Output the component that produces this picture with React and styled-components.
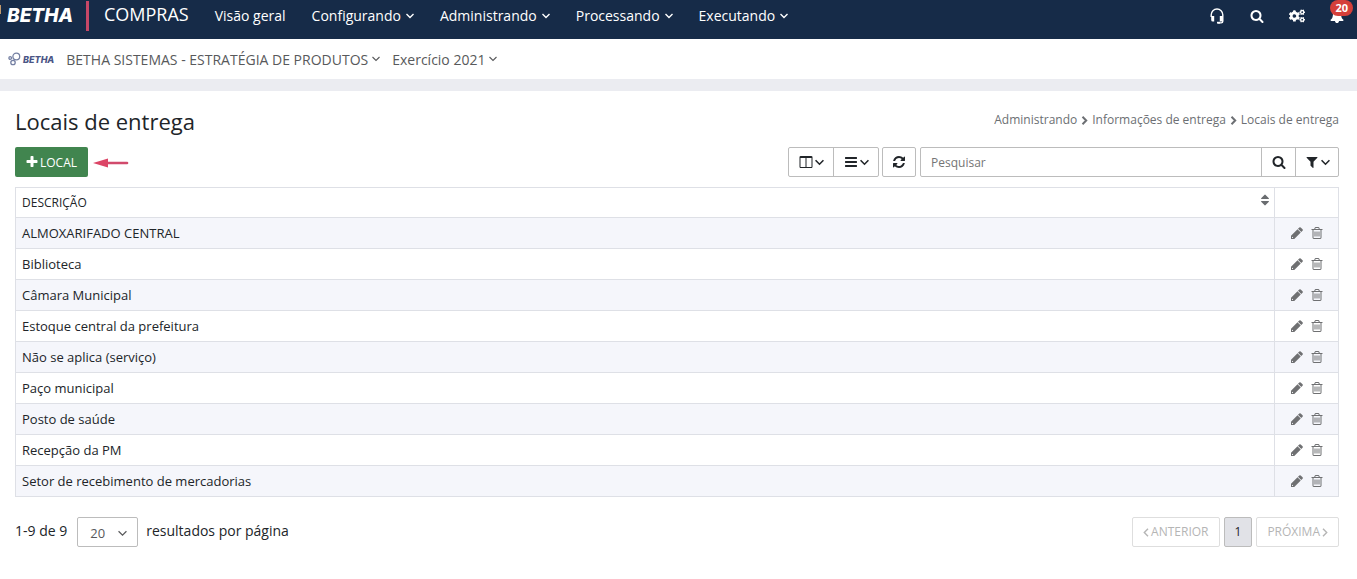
import React, { useState } from "react";
import styled, { createGlobalStyle } from "styled-components";
import { FaCogs } from "react-icons/fa";

const paths = {
  search:
    "M1216 832q0-185-131.5-316.5t-316.5-131.5-316.5 131.5-131.5 316.5 131.5 316.5 316.5 131.5 316.5-131.5 131.5-316.5zm512 832q0 52-38 90t-90 38q-54 0-90-38l-343-342q-179 124-399 124-143 0-273.5-55.5t-225-150-150-225-55.5-273.5 55.5-273.5 150-225 225-150 273.5-55.5 273.5 55.5 225 150 150 225 55.5 273.5q0 220-124 399l343 343q37 37 37 90z",
  bell: "M1728 1408q0 52-38 90t-90 38h-448q0 106-75 181t-181 75-181-75-75-181h-448q-52 0-90-38t-38-90q50-42 91-88t85-119.5 74.5-158.5 50-206 19.5-260q0-152 117-282.5t307-158.5q-8-19-8-39 0-40 28-68t68-28 68 28 28 68q0 20-8 39 190 28 307 158.5t117 282.5q0 139 19.5 260t50 206 74.5 158.5 85 119.5 91 88z",
  plus: "M1600 736v192q0 40-28 68t-68 28h-416v416q0 40-28 68t-68 28h-192q-40 0-68-28t-28-68v-416h-416q-40 0-68-28t-28-68v-192q0-40 28-68t68-28h416v-416q0-40 28-68t68-28h192q40 0 68 28t28 68v416h416q40 0 68 28t28 68z",
  columns:
    "M224 1536h608v-1152h-640v1120q0 13 9.500 22.500t22.500 9.500zm1376-32v-1120h-640v1152h608q13 0 22.500-9.500t9.500-22.500zm128-1216v1216q0 66-47 113t-113 47h-1344q-66 0-113-47t-47-113v-1216q0-66 47-113t113-47h1344q66 0 113 47t47 113z",
  bars: "M1664 1344v128q0 26-19 45t-45 19h-1408q-26 0-45-19t-19-45v-128q0-26 19-45t45-19h1408q26 0 45 19t19 45zm0-512v128q0 26-19 45t-45 19h-1408q-26 0-45-19t-19-45v-128q0-26 19-45t45-19h1408q26 0 45 19t19 45zm0-512v128q0 26-19 45t-45 19h-1408q-26 0-45-19t-19-45v-128q0-26 19-45t45-19h1408q26 0 45 19t19 45z",
  refresh:
    "M1639 1056q0 5-1 7-64 268-268 434.5t-478 166.5q-146 0-282.5-55t-243.5-157l-129 129q-19 19-45 19t-45-19-19-45v-448q0-26 19-45t45-19h448q26 0 45 19t19 45-19 45l-137 137q71 66 161 102t187 36q134 0 250-65t186-179q11-17 53-117 8-23 30-23h192q13 0 22.5 9.5t9.5 22.5zm25-800v448q0 26-19 45t-45 19h-448q-26 0-45-19t-19-45 19-45l138-138q-148-137-349-137-134 0-250 65t-186 179q-11 17-53 117-8 23-30 23h-199q-13 0-22.5-9.5t-9.5-22.5v-7q65-268 270-434.5t480-166.5q146 0 284 55.5t245 156.5l130-129q19-19 45-19t45 19 19 45z",
  filter:
    "M1595 295q17 41-14 70l-493 493v742q0 42-39 59-13 5-25 5-27 0-45-19l-256-256q-19-19-19-45v-486l-493-493q-31-29-14-70 17-39 59-39h1280q42 0 59 39z",
  sort: "M1408 1088q0 26-19 45l-448 448q-19 19-45 19t-45-19l-448-448q-19-19-19-45t19-45 45-19h896q26 0 45 19t19 45zm0-384q0 26-19 45t-45 19h-896q-26 0-45-19t-19-45 19-45l448-448q19-19 45-19t45 19l448 448q19 19 19 45z",
  pencil:
    "M350 1536l60-60-95-95-60 60v95h95zm610-1120l416 416-832 832h-416v-416zm683 96q0 53-37 90l-166 166-416-416 166-165q36-38 90-38 53 0 91 38l235 234q37 39 37 91z",
  trash:
    "M704 736v576q0 14-9 23t-23 9h-64q-14 0-23-9t-9-23v-576q0-14 9-23t23-9h64q14 0 23 9t9 23zm256 0v576q0 14-9 23t-23 9h-64q-14 0-23-9t-9-23v-576q0-14 9-23t23-9h64q14 0 23 9t9 23zm256 0v576q0 14-9 23t-23 9h-64q-14 0-23-9t-9-23v-576q0-14 9-23t23-9h64q14 0 23 9t9 23zm128 724v-948h-896v948q0 22 7 40.5t14.5 27 10.5 8.5h832q3 0 10.5-8.5t14.5-27 7-40.5zm-672-1076h448l-48-117q-7-9-17-11h-317q-10 2-17 11zm928 32v64q0 14-9 23t-23 9h-96v948q0 83-47 143.5t-113 60.5h-832q-66 0-113-58.5t-47-141.5v-952h-96q-14 0-23-9t-9-23v-64q0-14 9-23t23-9h309l70-167q15-37 54-63t79-26h320q40 0 79 26t54 63l70 167h309q14 0 23 9t9 23z",
};

const Icon = ({ name, size = 14 }) => (
  <svg width={size} height={size} viewBox="0 0 1792 1792" fill="currentColor" aria-hidden="true">
    <path d={paths[name]} />
  </svg>
);

// chevrons are cropped to the glyph so they sit tight against the label
const Caret = ({ size = 8, thin }) => (
  <svg width={size} height={size} viewBox="0 0 8 8" fill="none" stroke="currentColor" strokeWidth={thin ? 1.1 : 1.4} aria-hidden="true">
    <path d="M0.500 2 4 5.500 7.500 2" />
  </svg>
);

const Chevron = ({ left, bold }) => (
  <svg width={bold ? 7 : 6} height="9" viewBox="0 0 6 9" fill="none" stroke="currentColor" strokeWidth={bold ? 2 : 1.4} aria-hidden="true">
    <path d={left ? "M5 0.800 1.300 4.500 5 8.200" : "M1 0.800 4.700 4.500 1 8.200"} />
  </svg>
);

const Headset = () => (
  <svg width="14" height="16" viewBox="0 0 14 16" fill="none" stroke="currentColor" aria-hidden="true">
    <path d="M1.200 9V6.800a5.800 5.800 0 0 1 11.600 0V13.200q0 1.700-1.700 1.700H8" strokeWidth="1.400" />
    <path d="M1.200 8h3v5.500h-1.500q-1.500 0-1.500-1.500zM12.800 8h-3v5.500h3z" fill="currentColor" stroke="none" />
    <path d="M7 14.700h3" strokeWidth="1.800" />
  </svg>
);

const menu = ["Configurando", "Administrando", "Processando", "Executando"];

const locais = [
  "ALMOXARIFADO CENTRAL",
  "Biblioteca",
  "Câmara Municipal",
  "Estoque central da prefeitura",
  "Não se aplica (serviço)",
  "Paço municipal",
  "Posto de saúde",
  "Recepção da PM",
  "Setor de recebimento de mercadorias",
];

const App = () => {
  const [search, setSearch] = useState("");
  const [pageSize, setPageSize] = useState("20");

  return (
    <>
      <GlobalStyle />
      <TopBar>
        <LogoMark aria-hidden="true" />
        <Logo href="#">BETHA</Logo>
        <Product>COMPRAS</Product>
        <Menu>
          <MenuLink href="#">Visão geral</MenuLink>
          {menu.map((item) => (
            <MenuButton key={item}>
              {item}
              <Caret />
            </MenuButton>
          ))}
        </Menu>
        <Tools>
          <ToolButton aria-label="Suporte">
            <Headset />
          </ToolButton>
          <ToolButton aria-label="Buscar">
            <Icon name="search" />
          </ToolButton>
          <ToolButton aria-label="Configurações">
            <FaCogs size={16} />
          </ToolButton>
          <ToolButton aria-label="Notificações">
            <Icon name="bell" />
            <Badge>20</Badge>
          </ToolButton>
        </Tools>
      </TopBar>

      <ContextBar>
        <Brand>
          <svg width="13" height="14" viewBox="0 0 13 14" fill="none" stroke="#7580a3" strokeWidth="1.300" aria-hidden="true">
            <circle cx="8.300" cy="4.500" r="3.400" />
            <circle cx="5" cy="10.500" r="2.200" />
            <circle cx="2.200" cy="6" r="1.300" />
          </svg>
          BETHA
        </Brand>
        <ContextButton>
          BETHA SISTEMAS - ESTRATÉGIA DE PRODUTOS
          <Caret thin />
        </ContextButton>
        <ContextButton>
          Exercício 2021
          <Caret thin />
        </ContextButton>
      </ContextBar>

      <Main>
        <PageHeader>
          <h1>Locais de entrega</h1>
          <Breadcrumb>
            <a href="#">Administrando</a>
            <Chevron bold />
            <a href="#">Informações de entrega</a>
            <Chevron bold />
            <span>Locais de entrega</span>
          </Breadcrumb>
        </PageHeader>

        <Toolbar>
          <AddButton>
            <Icon name="plus" />
            LOCAL
          </AddButton>
          <svg width="36" height="12" viewBox="0 0 36 12" aria-hidden="true">
            <path d="M13 7H34" stroke="#d14a6c" strokeWidth="2.600" strokeLinecap="round" />
            <path d="M0 7 15 2.500V11.500z" fill="#dc4566" />
          </svg>
          <Tables>
            <Group>
              <GroupButton $width={44} aria-label="Colunas">
                <Icon name="columns" />
                <Caret size={9} />
              </GroupButton>
              <GroupButton $width={45} aria-label="Exibição">
                <Icon name="bars" />
                <Caret size={9} />
              </GroupButton>
            </Group>
            <Group>
              <GroupButton $width={32} aria-label="Atualizar">
                <Icon name="refresh" />
              </GroupButton>
            </Group>
          </Tables>
          <Group $search>
            <SearchInput
              aria-label="Pesquisar"
              placeholder="Pesquisar"
              value={search}
              onChange={(e) => setSearch(e.target.value)}
            />
            <GroupButton $width={34} aria-label="Buscar locais">
              <Icon name="search" />
            </GroupButton>
            <GroupButton $width={43} aria-label="Filtrar">
              <Icon name="filter" />
              <Caret size={9} />
            </GroupButton>
          </Group>
        </Toolbar>

        <Table>
          <thead>
            <tr>
              <th>
                <HeadCell>
                  DESCRIÇÃO
                  <Icon name="sort" />
                </HeadCell>
              </th>
              <ActionHead aria-label="Ações" />
            </tr>
          </thead>
          <tbody>
            {locais.map((local) => (
              <tr key={local}>
                <td>{local}</td>
                <td>
                  <Actions>
                    <RowButton aria-label={`Editar ${local}`}>
                      <Icon name="pencil" />
                    </RowButton>
                    <RowButton aria-label={`Excluir ${local}`}>
                      <Icon name="trash" />
                    </RowButton>
                  </Actions>
                </td>
              </tr>
            ))}
          </tbody>
        </Table>

        <Footer>
          <span>1-9 de 9</span>
          <SelectBox>
            <select
              id="page-size"
              value={pageSize}
              onChange={(e) => setPageSize(e.target.value)}
            >
              <option>20</option>
              <option>50</option>
              <option>100</option>
            </select>
            <Caret size={9} thin />
          </SelectBox>
          <label htmlFor="page-size">resultados por página</label>
          <Pager>
            <PageButton disabled>
              <Chevron left />
              ANTERIOR
            </PageButton>
            <PageButton $active>1</PageButton>
            <PageButton disabled>
              PRÓXIMA
              <Chevron />
            </PageButton>
          </Pager>
        </Footer>
      </Main>
    </>
  );
};

const GlobalStyle = createGlobalStyle`
  * {
    box-sizing: border-box;
  }
  body {
    margin: 0;
    background: #fff;
    color: #212529;
    font-family: "Open Sans", sans-serif;
    font-size: 13px;
  }
  button,
  input,
  select {
    font: inherit;
    color: inherit;
    margin: 0;
  }
  button {
    cursor: pointer;
  }
  a {
    color: inherit;
    text-decoration: none;
  }
  svg {
    flex: none;
    display: block;
  }
`;

const TopBar = styled.header`
  display: flex;
  align-items: center;
  height: 39px;
  padding-bottom: 8px;
  background: #162b48;
  color: #fff;
`;

const LogoMark = styled.span`
  width: 1px;
  height: 9px;
  margin: 0 6px 12px 0;
  background: #c39a6b;
`;

const Logo = styled.a`
  width: 79px;
  font-family: Inter, sans-serif;
  font-size: 19px;
  line-height: 30px;
  font-weight: 800;
  font-style: italic;
`;

const Product = styled.span`
  padding: 0 13px 4px 15px;
  border-left: 3px solid #c74767;
  font-size: 18px;
  line-height: 26px;
`;

const Menu = styled.nav`
  display: flex;
  font-size: 14px;
  line-height: 32px;
`;

const MenuLink = styled.a`
  padding: 0 13px;
`;

const MenuButton = styled.button`
  display: flex;
  align-items: center;
  gap: 5px;
  padding: 0 13px;
  border: 0;
  background: none;
`;

const Tools = styled.div`
  display: flex;
  gap: 12px;
  margin-left: auto;
  padding-right: 6px;
`;

const ToolButton = styled.button`
  position: relative;
  display: flex;
  justify-content: center;
  align-items: center;
  width: 28px;
  height: 30px;
  padding: 0;
  border: 0;
  background: none;
`;

const Badge = styled.span`
  position: absolute;
  top: -1px;
  right: -2px;
  padding: 0 5px;
  border-radius: 8px;
  background: #d43f3a;
  font-size: 11px;
  line-height: 16px;
  font-weight: 700;
`;

const ContextBar = styled.div`
  display: flex;
  align-items: center;
  gap: 12px;
  height: 52px;
  padding-left: 8px;
  border-bottom: 12px solid #ebecf1;
`;

const Brand = styled.span`
  display: flex;
  align-items: center;
  gap: 2px;
  color: #4a5585;
  font-family: Inter, sans-serif;
  font-size: 9px;
  font-weight: 800;
  font-style: italic;
`;

const ContextButton = styled.button`
  display: flex;
  align-items: center;
  gap: 4px;
  padding: 0;
  border: 0;
  background: none;
  color: #58595b;
  font-size: 14px;
`;

const Main = styled.main`
  padding: 16px 18px 30px 15px;
`;

const PageHeader = styled.div`
  display: flex;
  justify-content: space-between;
  align-items: flex-start;
  margin-bottom: 12px;
  h1 {
    margin: 0;
    font-size: 22px;
    line-height: 28px;
    font-weight: 400;
  }
`;

const Breadcrumb = styled.nav`
  display: flex;
  align-items: center;
  gap: 4px;
  color: #6c6f73;
  font-size: 12px;
  line-height: 26px;
`;

const Toolbar = styled.div`
  display: flex;
  align-items: center;
  gap: 4px;
  margin-bottom: 10px;
`;

const AddButton = styled.button`
  display: flex;
  align-items: center;
  gap: 1px;
  height: 30px;
  margin-right: 1px;
  padding: 0 11px 0 10px;
  border: 0;
  border-radius: 2px;
  background: #41854f;
  color: #fff;
  font-size: 12px;
`;

const Tables = styled.div`
  display: flex;
  gap: 3px;
  margin-left: auto;
`;

const Group = styled.div`
  display: flex;
  flex: ${(p) => (p.$search ? "0 1 419px" : "none")};
  height: 30px;
  border: 1px solid #bcbcbc;
  border-radius: 2px;
`;

const GroupButton = styled.button`
  display: flex;
  flex: none;
  justify-content: center;
  align-items: center;
  gap: 2px;
  width: ${(p) => p.$width}px;
  padding: 0;
  border: 0;
  background: none;
  & + &,
  input + & {
    border-left: 1px solid #bcbcbc;
  }
`;

const SearchInput = styled.input`
  flex: 1;
  min-width: 0;
  padding: 0 10px;
  border: 0;
  background: none;
  font-size: 12px;
  &::placeholder {
    color: #757575;
    opacity: 1;
  }
`;

const Table = styled.table`
  width: 100%;
  border-collapse: collapse;
  th,
  td {
    height: 31px;
    padding: 0 6px;
    border: 1px solid #dee0e6;
    text-align: left;
  }
  th {
    height: 30px;
    font-size: 12px;
    font-weight: 500;
  }
  tbody tr:nth-child(odd) {
    background: #f5f6fb;
  }
`;

const HeadCell = styled.div`
  display: flex;
  justify-content: space-between;
  align-items: center;
  svg {
    margin: 0 -4px 6px 0;
    color: #6a6d70;
  }
`;

const ActionHead = styled.th`
  width: 64px;
`;

const Actions = styled.div`
  display: flex;
  justify-content: center;
  gap: 6px;
`;

const RowButton = styled.button`
  padding: 0;
  border: 0;
  background: none;
  color: #6f7072;
`;

const Footer = styled.footer`
  display: flex;
  margin-top: 20px;
  font-size: 14px;
  line-height: 28px;
`;

const SelectBox = styled.div`
  position: relative;
  margin: 0 8px 0 10px;
  color: #58595b;
  select {
    display: block;
    width: 61px;
    height: 30px;
    padding: 1px 12px 0;
    border: 1px solid #bcbcbc;
    border-radius: 2px;
    background: #fff;
    font-size: 13px;
    appearance: none;
  }
  svg {
    position: absolute;
    top: 12px;
    right: 11px;
    pointer-events: none;
  }
`;

const Pager = styled.div`
  display: flex;
  gap: 4px;
  margin-left: auto;
`;

const PageButton = styled.button`
  display: flex;
  align-items: center;
  gap: 2px;
  height: 30px;
  padding: 0 10px;
  border: 1px solid ${(p) => (p.$active ? "#bcbcbc" : "#dedede")};
  border-radius: 2px;
  background: ${(p) => (p.$active ? "#e1e2e7" : "#fff")};
  font-size: 12px;
  &:disabled {
    color: #b5b5b5;
    cursor: default;
  }
`;

export default App;
